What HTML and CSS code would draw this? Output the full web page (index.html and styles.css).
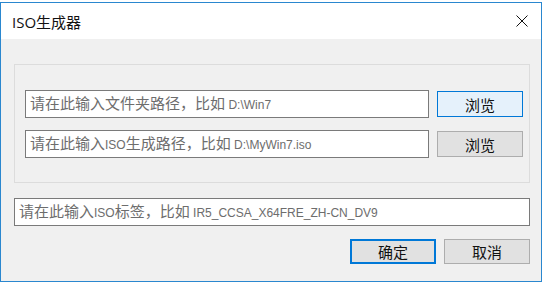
FILE: index.html
```html
<!DOCTYPE html>
<html lang="zh-CN">
<head>
  <meta charset="UTF-8">
  <title>ISO生成器</title>
  <link rel="stylesheet" href="styles.css">
</head>
<body>
  <div class="window">
    <div class="titlebar">
      <span class="title">ISO生成器</span>
      <svg class="close" width="12" height="12" viewBox="0 0 12 12">
        <path d="M0.5 0.5 L11.5 11.5 M11.5 0.5 L0.5 11.5" stroke="#111" stroke-width="1" fill="none"/>
      </svg>
    </div>
    <div class="content">
      <div class="group">
        <div class="row">
          <div class="field">请在此输入文件夹路径，比如 <span class="lat">D:\Win7</span></div>
          <button class="btn btn-hover">浏览</button>
        </div>
        <div class="row">
          <div class="field">请在此输入<span class="lat">ISO</span>生成路径，比如 <span class="lat">D:\MyWin7.iso</span></div>
          <button class="btn">浏览</button>
        </div>
      </div>
      <div class="field field-wide">请在此输入<span class="lat">ISO</span>标签，比如 <span class="lat">IR5_CCSA_X64FRE_ZH-CN_DV9</span></div>
      <div class="actions">
        <button class="btn btn-default">确定</button>
        <button class="btn">取消</button>
      </div>
    </div>
  </div>
</body>
</html>
```

FILE: styles.css
```css
body {
  margin: 0;
  background: #fff;
  font-family: "Noto Sans CJK SC", "Noto Sans", sans-serif;
}

.window {
  margin-top: 2px;
  width: 540px;
  height: 278px;
  border: 1px solid #2a87cf;
  background: #f0f0f0;
  display: flex;
  flex-direction: column;
}

.titlebar {
  height: 36px;
  background: #fff;
  display: flex;
  align-items: center;
  justify-content: space-between;
  padding: 0 13px 0 11px;
}

.title {
  font-family: "Open Sans", "Noto Sans CJK SC", sans-serif;
  font-size: 15px;
  color: #111;
}

.close {
  display: block;
}

.content {
  padding: 25px 11px 0 13px;
}

.group {
  border: 1px solid #dcdcdc;
  padding: 25px 6px 24px 10px;
  display: flex;
  flex-direction: column;
  gap: 12px;
}

.row {
  display: flex;
  align-items: center;
  gap: 8px;
}

.field {
  box-sizing: border-box;
  width: 404px;
  height: 28px;
  border: 1px solid #7a7a7a;
  background: #fff;
  color: #6d6d6d;
  font-size: 15px;
  line-height: 24px;
  padding: 0 4px;
  white-space: nowrap;
  overflow: hidden;
}

.lat {
  font-family: "Liberation Sans", sans-serif;
  font-size: 12px;
}

.field-wide {
  width: 516px;
  margin-top: 15px;
}

.btn {
  box-sizing: border-box;
  width: 86px;
  height: 26px;
  border: 1px solid #adadad;
  background: #e1e1e1;
  font-family: "Noto Sans CJK SC", sans-serif;
  font-size: 15px;
  color: #111;
  padding: 0;
}

.btn-hover {
  border-color: #0078d7;
  background: #e5f1fb;
}

.actions {
  display: flex;
  justify-content: flex-end;
  gap: 8px;
  margin-top: 13px;
}

.actions .btn {
  height: 25px;
}

.btn-default {
  border: 2px solid #0078d7;
}
```
